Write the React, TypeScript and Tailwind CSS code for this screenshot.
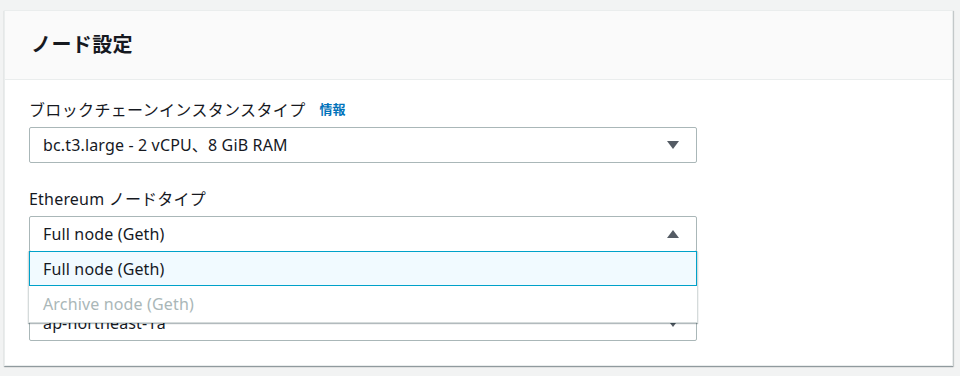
import React from 'react';

const font = { fontFamily: '"Noto Sans", "Noto Sans CJK JP", sans-serif' };

const Caret = ({ up = false }: { up?: boolean }) => (
  <svg width="12" height="8" viewBox="0 0 12 8" className="shrink-0">
    {up ? <path d="M6 0 L12 8 L0 8 Z" fill="#545b64" /> : <path d="M0 0 L12 0 L6 8 Z" fill="#545b64" />}
  </svg>
);

const Select = ({ value, up = false }: { value: string; up?: boolean }) => (
  <div className="flex h-[36px] w-[668px] items-center justify-between rounded-[2px] border border-[#aab7b8] bg-white pl-[13px] pr-[17px]">
    <span className="text-[16px] tracking-[0.15px] text-[#16191f]">{value}</span>
    <Caret up={up} />
  </div>
);

const App = () => {
  const options = [
    { label: 'Full node (Geth)', selected: true },
    { label: 'Archive node (Geth)', disabled: true },
  ];

  return (
    <div className="h-[376px] w-[960px] bg-[#f2f3f3] pl-[4px] pt-[10px]" style={font}>
      <div className="w-[949px] border border-[#eaeded] bg-white shadow-[0_1px_1px_0_rgba(0,28,36,0.3),1px_1px_1px_0_rgba(0,28,36,0.15)]">
        {/* header */}
        <div className="flex h-[69px] items-center border-b border-[#eaeded] bg-[#fafafa] pl-[26px]">
          <h2 className="text-[20px] font-bold tracking-[0.4px] text-[#16191f]">ノード設定</h2>
        </div>

        {/* body */}
        <div className="flex flex-col pb-[24px] pl-[24px] pt-[19px]">
          <div className="mb-[6px] flex h-[22px] items-center gap-[14px]">
            <span className="text-[16px] tracking-[0.35px] text-[#16191f]">ブロックチェーンインスタンスタイプ</span>
            <span className="text-[13px] font-bold text-[#0073bb]">情報</span>
          </div>
          <Select value="bc.t3.large - 2 vCPU、8 GiB RAM" />

          <div className="mb-[6px] mt-[25px] flex h-[22px] items-center">
            <span className="text-[16px] tracking-[0.2px] text-[#16191f]">Ethereum ノードタイプ</span>
          </div>
          <div className="relative z-10">
            <Select value="Full node (Geth)" up />
            <div className="absolute left-[-1px] top-[35px] w-[670px] border-x border-b border-[#d5dbdb] bg-white shadow-[0_1px_1px_0_rgba(0,28,36,0.3)]">
              {options.map((o) => (
                <div
                  key={o.label}
                  className={
                    o.selected
                      ? 'flex h-[35px] items-center border border-[#00a1c9] bg-[#f1faff] pl-[13px] text-[16px] tracking-[0.15px] text-[#16191f]'
                      : 'flex h-[36px] items-center pl-[14px] text-[16px] tracking-[0.15px] text-[#aab7b8]'
                  }
                >
                  {o.label}
                </div>
              ))}
            </div>
          </div>

          {/* label of the next field sits under the open list */}
          <div className="mb-[6px] mt-[25px] h-[22px]" />
          <Select value="ap-northeast-1a" />
        </div>
      </div>
    </div>
  );
};

export default App;
